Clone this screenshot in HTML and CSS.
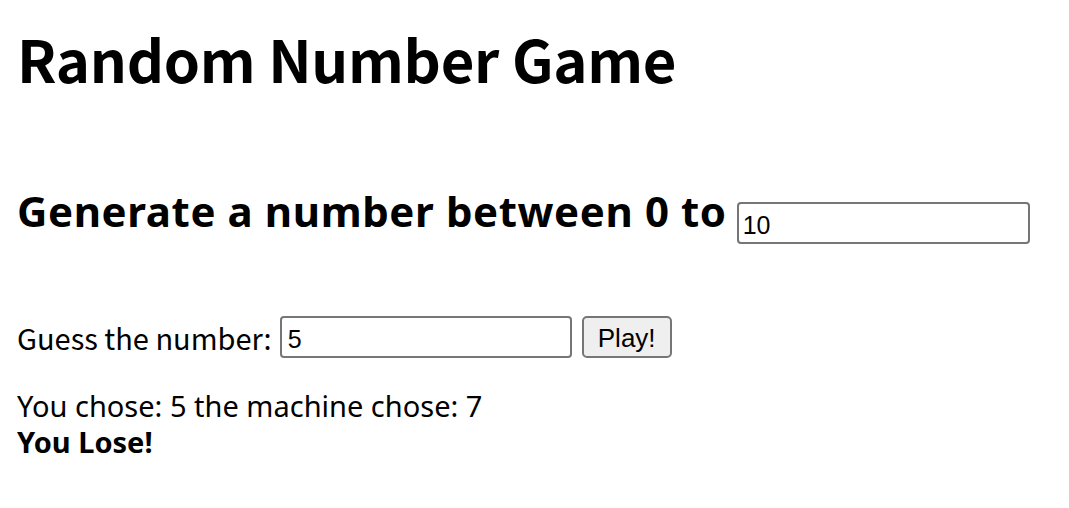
FILE: index.html
```html
<!DOCTYPE html>
<html lang="en">
<head>
<meta charset="utf-8">
<title>Random Number Game</title>
<link rel="stylesheet" href="styles.css">
</head>
<body>
  <main class="page">
    <h1 class="title">Random Number Game</h1>
    <h2 class="range">Generate a number between 0 to <input class="field field-range" type="text" value="10"></h2>
    <div class="guess-row">
      <label class="guess-label">Guess the number:</label>
      <input class="field field-guess" type="text" value="5">
      <button class="play-btn" type="button">Play!</button>
    </div>
    <p class="result">You chose: 5 the machine chose: 7<br><strong class="verdict">You Lose!</strong></p>
  </main>
</body>
</html>
```

FILE: styles.css
```css
html, body {
  margin: 0;
  padding: 0;
  background: #ffffff;
  color: #000000;
}

.page {
  padding: 0 17px;
  font-family: "Noto Sans", "Open Sans", sans-serif;
}

.title {
  margin: 0;
  padding-top: 18px;
  font-family: "Noto Sans CJK KR", "Noto Sans", sans-serif;
  font-weight: 700;
  font-size: 58px;
  line-height: 80px;
  letter-spacing: -0.3px;
}

.range {
  margin: 0;
  padding-top: 85px;
  font-family: "Noto Sans", "Open Sans", sans-serif;
  font-weight: 700;
  font-size: 42px;
  line-height: 56px;
  letter-spacing: 0.6px;
  display: flex;
  align-items: baseline;
  gap: 10px;
}

.field {
  box-sizing: border-box;
  height: 42px;
  border: 2px solid #767676;
  border-radius: 4px;
  background: #ffffff;
  font-family: "Liberation Sans", Arial, sans-serif;
  font-size: 25px;
  letter-spacing: 0;
  color: #000000;
  outline: none;
}

.field-range {
  width: 293px;
  padding: 4px 4px 0;
  font-weight: 400;
  align-self: flex-start;
  margin-top: 19px;
}

.guess-row {
  display: flex;
  align-items: center;
  margin-top: 72px;
  height: 42px;
}

.guess-label {
  font-family: "Noto Sans CJK KR", "Noto Sans", sans-serif;
  font-size: 29px;
  margin-right: 8px;
}

.field-guess {
  width: 292px;
  padding: 4px 6px 0;
}

.play-btn {
  box-sizing: border-box;
  margin-left: 10px;
  width: 90px;
  height: 42px;
  border: 2px solid #767676;
  border-radius: 5px;
  background: #efefef;
  font-family: "Liberation Sans", Arial, sans-serif;
  font-size: 26px;
  color: #000000;
  padding: 2px 0 0;
}

.result {
  margin: 30px 0 0;
  font-size: 29px;
  line-height: 36px;
}

.verdict {
  font-weight: 700;
}
```
